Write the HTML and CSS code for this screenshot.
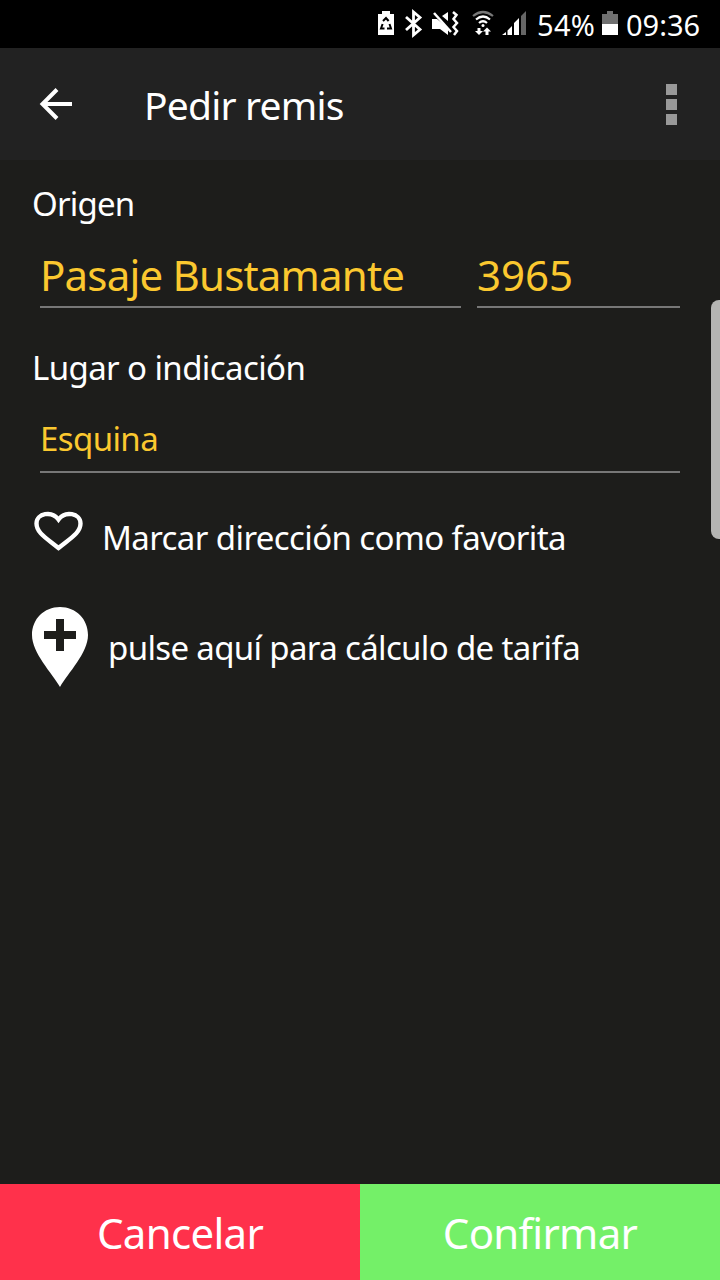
FILE: index.html
```html
<!DOCTYPE html>
<html lang="es">
<head>
<meta charset="utf-8">
<title>Pedir remis</title>
<link rel="stylesheet" href="styles.css">
</head>
<body>
<div class="screen">
  <div class="status">
    <svg class="status-icons" width="160" height="48" viewBox="370 0 160 48" fill="none">
      <path d="M378 14h4v-3h8v3h4v21h-16z" fill="#fff"/>
      <path d="M383 21l3-3 2.600 3M389.500 24l1.500 4.500h-4M384.500 28.500H381l1.600-4.500" stroke="#000" stroke-width="2"/>
      <path d="M406 17l14 12.500-6.500 5.500V12l6.500 5.500L406 30" stroke="#fff" stroke-width="2.800"/>
      <path d="M432 19h5l11 9v7l-8-6h-8zM442 16l6-4v9z" fill="#fff"/>
      <path d="M434 13l17 19" stroke="#fff" stroke-width="2.500"/>
      <path d="M453 12l3.500 3-3 4 3.500 4-3.500 4 3.500 4-3 4" stroke="#fff" stroke-width="2.500"/>
      <path d="M473 16q10-8 20 0" stroke="#777" stroke-width="2.200"/>
      <path d="M476 19.500q7-6 14 0M479 23q4-3.500 8 0" stroke="#fff" stroke-width="2.200"/>
      <circle cx="483" cy="25.500" r="1.500" fill="#fff"/>
      <path d="M477.500 28h3v3h2.500l-4 4-4-4h2.500zM485.500 35h3v-3.500h2.500l-4-4-4 4h2.500z" fill="#fff"/>
      <path d="M502 35l4-3v3zM507.500 30.500l4.500-4.500v9h-4.500zM514 23l5-5v17h-5z" fill="#fff"/>
      <path d="M521 16l5-5v24h-5z" fill="#666"/>
    </svg>
    <span class="percent">54%</span>
    <svg class="battery" width="16" height="48" viewBox="0 0 16 48">
      <path d="M0 14h5v-3h6v3h5v10H0z" fill="#707070"/><path d="M0 24h16v11H0z" fill="#fff"/>
    </svg>
    <span class="clock">09:36</span>
  </div>
  <header class="appbar">
    <svg class="back" width="36" height="36" viewBox="0 0 36 36" fill="none" stroke="#fff" stroke-width="4"><path d="M34 18H5M19 3.500L4.500 18L19 32.500"/></svg>
    <h1 class="title">Pedir remis</h1>
    <div class="more"><i></i><i></i><i></i></div>
  </header>
  <main class="form">
    <div class="label origin">Origen</div>
    <div class="address">
      <div class="field street"><span>Pasaje Bustamante</span></div>
      <div class="field number"><span>3965</span></div>
    </div>
    <div class="label place">Lugar o indicación</div>
    <div class="field hint"><span>Esquina</span></div>
    <div class="row favorite">
      <svg width="50" height="42" viewBox="0 0 50 42" fill="none" stroke="#fff" stroke-width="4.400"><path d="M25.500 37C14 27.500 3.500 22 3.500 12.500C3.500 2 19-.5 25.500 8.500C32 -.5 47.500 2 47.500 12.500C47.500 22 37 27.500 25.500 37z"/></svg>
      <span class="label">Marcar dirección como favorita</span>
    </div>
    <div class="row fare">
      <svg width="56" height="80" viewBox="0 0 56 80"><path d="M28 80C20 66 0 46 0 28C0 12 12 0 28 0s28 12 28 28C56 46 36 66 28 80z" fill="#fff"/><path d="M24 12h8v12h12v8H32v12h-8V32H12v-8h12z" fill="#1d1d1b"/></svg>
      <span class="label">pulse aquí para cálculo de tarifa</span>
    </div>
  </main>
  <footer class="actions">
    <div class="btn cancel"><span>Cancelar</span></div>
    <div class="btn confirm"><span>Confirmar</span></div>
  </footer>
  <div class="edge-handle"></div>
</div>
</body>
</html>
```
FILE: styles.css
```css
* { box-sizing: border-box; }
body { margin: 0; background: #1d1d1b; color: #fff; font-family: "Noto Sans", sans-serif; }
svg { display: block; flex: none; }
.screen { position: relative; width: 720px; height: 1280px; display: flex; flex-direction: column; overflow: hidden; background: #1d1d1b; white-space: nowrap; }
.status { height: 48px; background: #000; display: flex; padding-left: 370px; font-size: 29px; line-height: 50px; }
.percent { width: 72px; padding-left: 7px; letter-spacing: 0.3px; }
.clock { padding-left: 8px; letter-spacing: 0; }
.appbar { height: 112px; background: #222; display: flex; align-items: center; padding: 0 43px 0 38px; }
.title { margin: 0 0 0 70px; font-size: 39px; font-weight: 400; line-height: 112px; letter-spacing: -0.8px; padding-top: 2px; }
.more { margin-left: auto; display: grid; gap: 4px; }
.more i { display: block; width: 11px; height: 11px; background: #999; }
.form { flex: 1; padding: 26px 40px 0 32px; }
.label { font-size: 33px; line-height: 36px; letter-spacing: -0.6px; }
.origin { letter-spacing: -0.8px; }
.address { display: flex; gap: 16px; }
.field { border-bottom: 2px solid #777; color: #fbc82f; margin-left: 8px; }
.street { width: 421px; height: 86px; font-size: 42px; line-height: 105px; letter-spacing: -0.8px; }
.number { width: 203px; height: 86px; margin-left: 0; font-size: 42px; line-height: 105px; }
.place { margin-top: 42px; }
.hint { height: 87px; font-size: 33px; line-height: 106px; letter-spacing: -0.6px; }
.row { display: flex; align-items: center; }
.favorite { height: 42px; margin: 38px 0 0 1px; }
.favorite .label { margin: 12px 0 0 19px; }
.fare { height: 80px; margin-top: 54px; }
.fare .label { margin: 2px 0 0 20px; letter-spacing: -0.65px; }
.actions { display: grid; grid-template-columns: 1fr 1fr; height: 96px; }
.btn { font-size: 42px; line-height: 98px; height: 96px; text-align: center; letter-spacing: -0.7px; }
.cancel { background: #ff314b; }
.confirm { background: #74f068; }
.edge-handle { position: absolute; right: 0; top: 300px; width: 9px; height: 239px; border-radius: 8px 0 0 8px; background: #b5b5b3; }
```
